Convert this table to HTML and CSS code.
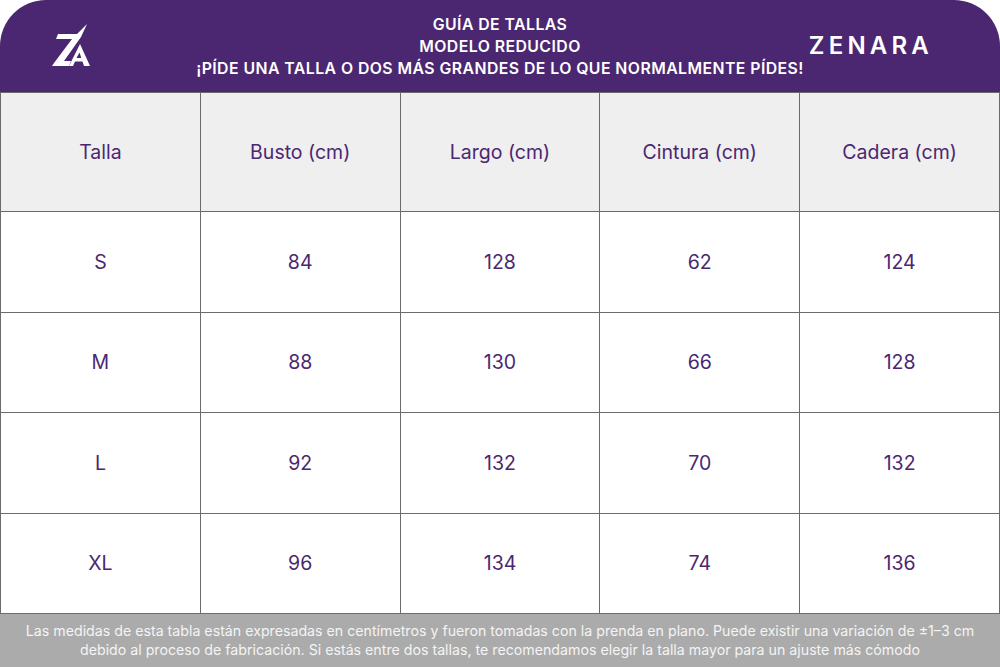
FILE: index.html
```html
<!DOCTYPE html>
<html lang="es">
<head>
<meta charset="utf-8">
<title>Guía de tallas</title>
<link rel="stylesheet" href="styles.css">
</head>
<body>
<div class="page">
  <header class="top">
    <div class="logo">
      <svg viewBox="0 0 40 44" width="40" height="44" aria-hidden="true">
        <path fill="#fff" d="M8 11 L27 11 L37 1 L31 14 L14 38 L21 38 L19 43 L2 43 L4 40 L22 16 L6 16 Z"/>
        <path fill="#fff" fill-rule="evenodd" d="M19 43 L30 21 L40 43 L34 43 L32.5 38.5 L25 38.5 L23 43 Z M26.5 35 L31.3 35 L29.5 29.5 Z"/>
      </svg>
    </div>
    <div class="titles">
      <p>GUÍA DE TALLAS</p>
      <p>MODELO REDUCIDO</p>
      <p>¡PÍDE UNA TALLA O DOS MÁS GRANDES DE LO QUE NORMALMENTE PÍDES!</p>
    </div>
    <div class="brand">ZENARA</div>
  </header>
  <main class="grid">
    <div class="cell head">Talla</div>
    <div class="cell head">Busto (cm)</div>
    <div class="cell head">Largo (cm)</div>
    <div class="cell head">Cintura (cm)</div>
    <div class="cell head">Cadera (cm)</div>

    <div class="cell">S</div><div class="cell">84</div><div class="cell">128</div><div class="cell">62</div><div class="cell">124</div>
    <div class="cell">M</div><div class="cell">88</div><div class="cell">130</div><div class="cell">66</div><div class="cell">128</div>
    <div class="cell">L</div><div class="cell">92</div><div class="cell">132</div><div class="cell">70</div><div class="cell">132</div>
    <div class="cell">XL</div><div class="cell">96</div><div class="cell">134</div><div class="cell">74</div><div class="cell">136</div>
  </main>
  <footer class="note">
    <p>Las medidas de esta tabla están expresadas en centímetros y fueron tomadas con la prenda en plano. Puede existir una variación de ±1–3 cm</p>
    <p>debido al proceso de fabricación. Si estás entre dos tallas, te recomendamos elegir la talla mayor para un ajuste más cómodo</p>
  </footer>
</div>
</body>
</html>
```
FILE: styles.css
```css
* { box-sizing: border-box; }
html, body { margin: 0; padding: 0; background: #fff; }
body { font-family: "Inter", "Liberation Sans", sans-serif; }
.page { width: 1000px; height: 667px; display: flex; flex-direction: column; overflow: hidden; }

.top {
  height: 92px;
  flex: none;
  background: #4b2771;
  border-radius: 46px 46px 0 0;
  display: grid;
  grid-template-columns: 1fr auto 1fr;
  align-items: center;
  color: #fff;
}
.logo { width: 40px; height: 44px; margin: -2px 0 0 50px; }
.logo svg { display: block; }
.titles {
  text-align: center;
  font-weight: 600;
  font-size: 15.8px;
  letter-spacing: 0.45px;
  line-height: 22px;
  padding-top: 2px;
}
.titles p { margin: 0; }
.brand {
  justify-self: end;
  margin-right: 67px;
  font-size: 24px;
  font-weight: 600;
  letter-spacing: 4.2px;
  margin-top: -1px;
}

.grid {
  height: 522px;
  flex: none;
  display: grid;
  grid-template-columns: repeat(5, 1fr);
  grid-template-rows: 118px repeat(4, 1fr);
  gap: 1px;
  padding: 1px;
  background: #6b6b6b;
}
.cell {
  background: #fff;
  display: flex;
  align-items: center;
  justify-content: center;
  color: #4b2771;
  font-size: 19.5px;
  font-weight: 400;
}
.cell.head { background: #efefef; }

.note {
  flex: 1;
  background: #ababab;
  color: #f4f4f4;
  text-align: center;
  font-size: 14.2px;
  line-height: 19px;
  padding-top: 7px;
}
.note p { margin: 0; }
```
